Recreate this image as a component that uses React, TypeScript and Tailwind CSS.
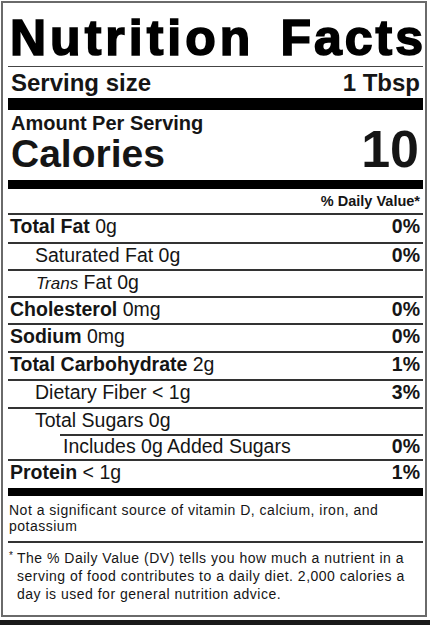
import React from "react";

type Row = {
  h: string;
  indent: string;
  content: React.ReactNode;
  dv?: string;
};

const rows: Row[] = [
  { h: "h-[29px]", indent: "pl-[2px]", content: <><b>Total Fat</b> 0g</>, dv: "0%" },
  { h: "h-[27px]", indent: "pl-[27px]", content: <>Saturated Fat 0g</>, dv: "0%" },
  { h: "h-[27px]", indent: "pl-[28px]", content: <><i className="text-[17px]">Trans</i> Fat 0g</> },
  { h: "h-[27px]", indent: "pl-[2px]", content: <><b>Cholesterol</b> 0mg</>, dv: "0%" },
  { h: "h-[28px]", indent: "pl-[2px]", content: <><b>Sodium</b> 0mg</>, dv: "0%" },
  { h: "h-[28px]", indent: "pl-[2px]", content: <><b>Total Carbohydrate</b> 2g</>, dv: "1%" },
  { h: "h-[28px]", indent: "pl-[27px]", content: <>Dietary Fiber &lt; 1g</>, dv: "3%" },
  { h: "h-[27px]", indent: "pl-[27px]", content: <>Total Sugars 0g</> },
];

export default function App() {
  return (
    <div className="w-[430px] h-[625px] bg-white overflow-hidden flex flex-col font-['Liberation_Sans',Arial,sans-serif] text-[#151515]">
      <div className="ml-[1px] mt-[1px] w-[426px] h-[617px] border-2 border-[#6a6a6a] pl-[5px] pr-[2px] flex flex-col">
        {/* Title */}
        <div className="h-[63px] pt-[10px] pl-[2px] flex justify-between text-[50px] leading-[50px] font-bold text-black [-webkit-text-stroke:1.6px_black]">
          <span className="tracking-[4px]">Nutrition</span>
          <span className="tracking-[3px] -mr-[3px]">Facts</span>
        </div>
        <div className="h-[1px] bg-[#444]" />
        {/* Serving size */}
        <div className="h-[31px] flex justify-between items-start text-[24px] leading-[31px] font-bold px-[3px]">
          <span>Serving size</span>
          <span>1 Tbsp</span>
        </div>
        <div className="h-[12px] bg-black" />
        {/* Amount per serving */}
        <div className="h-[25px] pt-[3px] pl-[3px] text-[20px] leading-[20px] font-bold">
          Amount Per Serving
        </div>
        <div className="h-[45px] flex justify-between items-start pl-[3px] pr-[4px] font-bold">
          <span className="text-[39px] leading-[38px]">Calories</span>
          <span className="text-[52px] leading-[38px] -mt-[5px]">10</span>
        </div>
        <div className="h-[9px] bg-black" />
        <div className="h-[24px] text-right pr-[3px] text-[14.5px] leading-[24px] font-bold">
          % Daily Value*
        </div>
        {/* Nutrient rows */}
        {rows.map((r, i) => (
          <div
            key={i}
            className={`${r.h} border-t-2 border-[#333] flex justify-between items-start ${r.indent} pr-[3px] text-[19.5px] leading-[22px]`}
          >
            <span>{r.content}</span>
            {r.dv && <b>{r.dv}</b>}
          </div>
        ))}
        <div className="h-[25px] ml-[52px] border-t-2 border-[#333] flex justify-between items-start pl-[3px] pr-[3px] text-[19.5px] leading-[21px]">
          <span>Includes 0g Added Sugars</span>
          <b>0%</b>
        </div>
        <div className="h-[29px] border-t-2 border-[#333] flex justify-between items-start pl-[2px] pr-[3px] text-[19.5px] leading-[22px]">
          <span>
            <b>Protein</b> &lt; 1g
          </span>
          <b>1%</b>
        </div>
        <div className="h-[8px] bg-black" />
        {/* Vitamins note */}
        <div className="h-[45px] pt-[6px] pl-[1px] pr-[2px] text-[14px] leading-[16px] tracking-[0.5px]">
          Not a significant source of vitamin D, calcium, iron, and potassium
        </div>
        <div className="h-[2px] bg-[#333]" />
        {/* Footnote */}
        <div className="pt-[6px] flex text-[14px] leading-[18px] tracking-[0.5px]">
          <span className="w-[9px] shrink-0 pl-[1px] text-[10px] leading-[14px]">*</span>
          <span>
            The % Daily Value (DV) tells you how much a nutrient in a serving of food contributes to a daily diet. 2,000
            calories a day is used for general nutrition advice.
          </span>
        </div>
      </div>
      <div className="mt-[3px] h-[5px] bg-[#1a1a1a]" />
    </div>
  );
}
